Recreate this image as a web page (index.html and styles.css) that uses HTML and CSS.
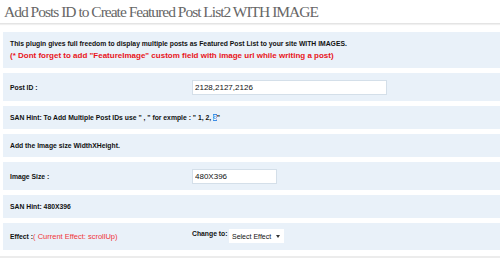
FILE: index.html
```html
<!DOCTYPE html>
<html lang="en">
<head>
    <meta charset="UTF-8">
    <title>Featured Post List2</title>
    <link rel="stylesheet" href="styles.css">
</head>
<body>
    <div class="wrap">
        <h2 class="page-title">Add Posts ID to Create Featured Post List2 WITH IMAGE</h2>

        <div class="box intro">
            <p class="info">This plugin gives full freedom to display multiple posts as Featured Post List to your site WITH IMAGES.</p>
            <p class="warn">(* Dont forget to add "FeatureImage" custom field with image url while writing a post)</p>
        </div>

        <div class="box row">
            <label class="label">Post ID :</label>
            <input type="text" class="field wide" value="2128,2127,2126">
        </div>

        <div class="box hint">
            <p>SAN Hint: To Add Multiple Post IDs use " , " for exmple : " 1, 2, <span class="sel">3</span>"</p>
        </div>

        <div class="box hint">
            <p>Add the Image size WidthXHeight.</p>
        </div>

        <div class="box row">
            <label class="label">Image Size :</label>
            <input type="text" class="field short" value="480X396">
        </div>

        <div class="box hint">
            <p>SAN Hint: 480X396</p>
        </div>

        <div class="box row effect">
            <label class="label">Effect :<span class="current">( Current Effect: scrollUp)</span></label>
            <span class="change">Change to:</span>
            <span class="select">Select Effect <span class="arrow"></span></span>
        </div>

        <div class="bottom-line"></div>
    </div>
</body>
</html>
```

FILE: styles.css
```css
body {
    margin: 0;
    background-color: #fff;
    font-family: 'Liberation Sans', Arial, sans-serif;
    color: #222;
}
.wrap {
    padding-left: 3px;
}
.page-title {
    margin: 0 0 8px -3px;
    padding: 4px 0 0 4px;
    height: 19px;
    font-family: 'Liberation Serif', serif;
    font-weight: normal;
    font-size: 15.5px;
    line-height: 16px;
    letter-spacing: -1px;
    color: #666;
    border-bottom: 1px solid #e4e4e4;
    box-shadow: 0 1px 1px #f0f0f0;
}
.box {
    background-color: #e9f1f9;
    margin-bottom: 5px;
    padding: 0 7px;
    font-size: 6.8px;
    font-weight: bold;
    color: #111;
}
.box p {
    margin: 0;
}
.intro {
    height: 36px;
    padding-top: 8px;
    box-sizing: border-box;
}
.intro .warn {
    margin-top: 4px;
    font-size: 8px;
    color: #e8141b;
}
.row {
    display: flex;
    align-items: center;
    height: 28px;
}
.hint {
    display: flex;
    align-items: center;
    height: 23px;
}
.label {
    width: 182px;
}
.field {
    height: 15px;
    box-sizing: border-box;
    border: 1px solid #d4dfe9;
    background: #fff;
    font-family: 'Liberation Sans', Arial, sans-serif;
    font-size: 8px;
    padding: 0 2px;
    color: #111;
}
.wide {
    width: 195px;
}
.short {
    width: 85px;
}
.sel {
    background-color: #3d8ee6;
    color: #fff;
}
.effect {
    height: 27px;
    align-items: flex-start;
}
.effect .label {
    align-self: center;
}
.current {
    color: #f0343a;
    font-weight: normal;
    font-size: 7.5px;
}
.change {
    margin-top: 7px;
    width: 37px;
    white-space: nowrap;
}
.select {
    margin-top: 6px;
    display: flex;
    align-items: center;
    gap: 5px;
    height: 14px;
    padding: 0 4px 0 3px;
    background: #fff;
    font-weight: normal;
    font-size: 7px;
    white-space: nowrap;
}
.arrow {
    border-left: 2.5px solid transparent;
    border-right: 2.5px solid transparent;
    border-top: 3px solid #333;
}
.bottom-line {
    margin: 6px 0 0 -3px;
    height: 2px;
    background: #ececec;
}
```
